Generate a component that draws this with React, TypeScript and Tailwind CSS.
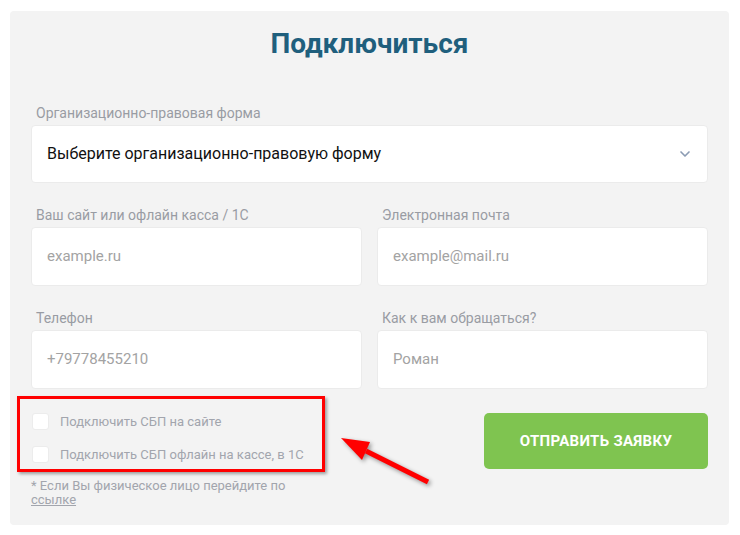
import { ChevronDown } from "lucide-react";

function Field({ label, placeholder }: { label: string; placeholder: string }) {
  return (
    <div className="flex flex-col">
      <label className="text-[14px] leading-5 text-[#999ca3] pl-[5px] mb-[2px]">{label}</label>
      <div className="h-[59px] bg-white rounded-[4px] border border-[#ebebeb] flex items-center px-[15px] text-[15px] text-[#a3a3a3]">
        {placeholder}
      </div>
    </div>
  );
}

function Check({ label }: { label: string }) {
  return (
    <div className="flex items-center h-[17px]">
      <span className="w-[17px] h-[17px] bg-white rounded-[3px] border border-[#ececec] shrink-0" />
      <span className="ml-[11px] text-[13px] text-[#a2a5ad] whitespace-nowrap">{label}</span>
    </div>
  );
}

export default function App() {
  return (
    <div className="bg-white w-[740px] h-[535px] pt-[11px] pl-[10px] font-['Roboto',sans-serif]">
      <div className="relative w-[719px] h-[514px] bg-[#f3f3f3] rounded-[4px] px-[21px] pt-[17px]">
        <h1 className="text-center text-[28px] leading-8 font-bold text-[#1f5f7d]">Подключиться</h1>

        {/* Organization form */}
        <div className="mt-[43px] flex flex-col">
          <label className="text-[14px] leading-5 text-[#999ca3] pl-[5px] mb-[2px]">Организационно-правовая форма</label>
          <div className="h-[58px] bg-white rounded-[4px] border border-[#ebebeb] flex items-center justify-between pl-[15px] pr-[14px]">
            <span className="text-[16px] text-[#111]">Выберите организационно-правовую форму</span>
            <ChevronDown size={16} strokeWidth={2.5} className="text-[#8b9bb3]" />
          </div>
        </div>

        <div className="mt-[22px] grid grid-cols-2 gap-x-[15px]">
          <Field label="Ваш сайт или офлайн касса / 1С" placeholder="example.ru" />
          <Field label="Электронная почта" placeholder="example@mail.ru" />
        </div>

        <div className="mt-[22px] grid grid-cols-2 gap-x-[15px]">
          <Field label="Телефон" placeholder="+79778455210" />
          <Field label="Как к вам обращаться?" placeholder="Роман" />
        </div>

        {/* Bottom row */}
        <div className="mt-[24px] flex justify-between items-start">
          <div className="flex flex-col">
            <div className="flex flex-col gap-[16px] pl-px">
              <Check label="Подключить СБП на сайте" />
              <Check label="Подключить СБП офлайн на кассе, в 1С" />
            </div>
            <p className="mt-[16px] w-[290px] text-[13px] leading-[14px] text-[#a2a5ad]">
              * Если Вы физическое лицо перейдите по <a className="underline">ссылке</a>
            </p>
          </div>
          <button className="w-[224px] h-[56px] bg-[#7fc450] rounded-[5px] text-white font-bold text-[15px] uppercase tracking-[0.3px]">
            Отправить заявку
          </button>
        </div>

        {/* Annotation overlay */}
        <div className="absolute left-[7px] top-[385px] w-[308px] h-[76px] border-[3px] border-[#ff0000] shadow-[2px_2px_3px_rgba(0,0,0,0.35)]" />
        <svg
          className="absolute left-[320px] top-[414px] drop-shadow-[2px_2px_2px_rgba(0,0,0,0.4)]"
          width="110"
          height="65"
          viewBox="0 0 110 65"
        >
          <line x1="36" y1="26" x2="98" y2="57" stroke="#ff0000" strokeWidth="5" />
          <polygon points="11,13 40,17 32,35" fill="#ff0000" />
        </svg>
      </div>
    </div>
  );
}
